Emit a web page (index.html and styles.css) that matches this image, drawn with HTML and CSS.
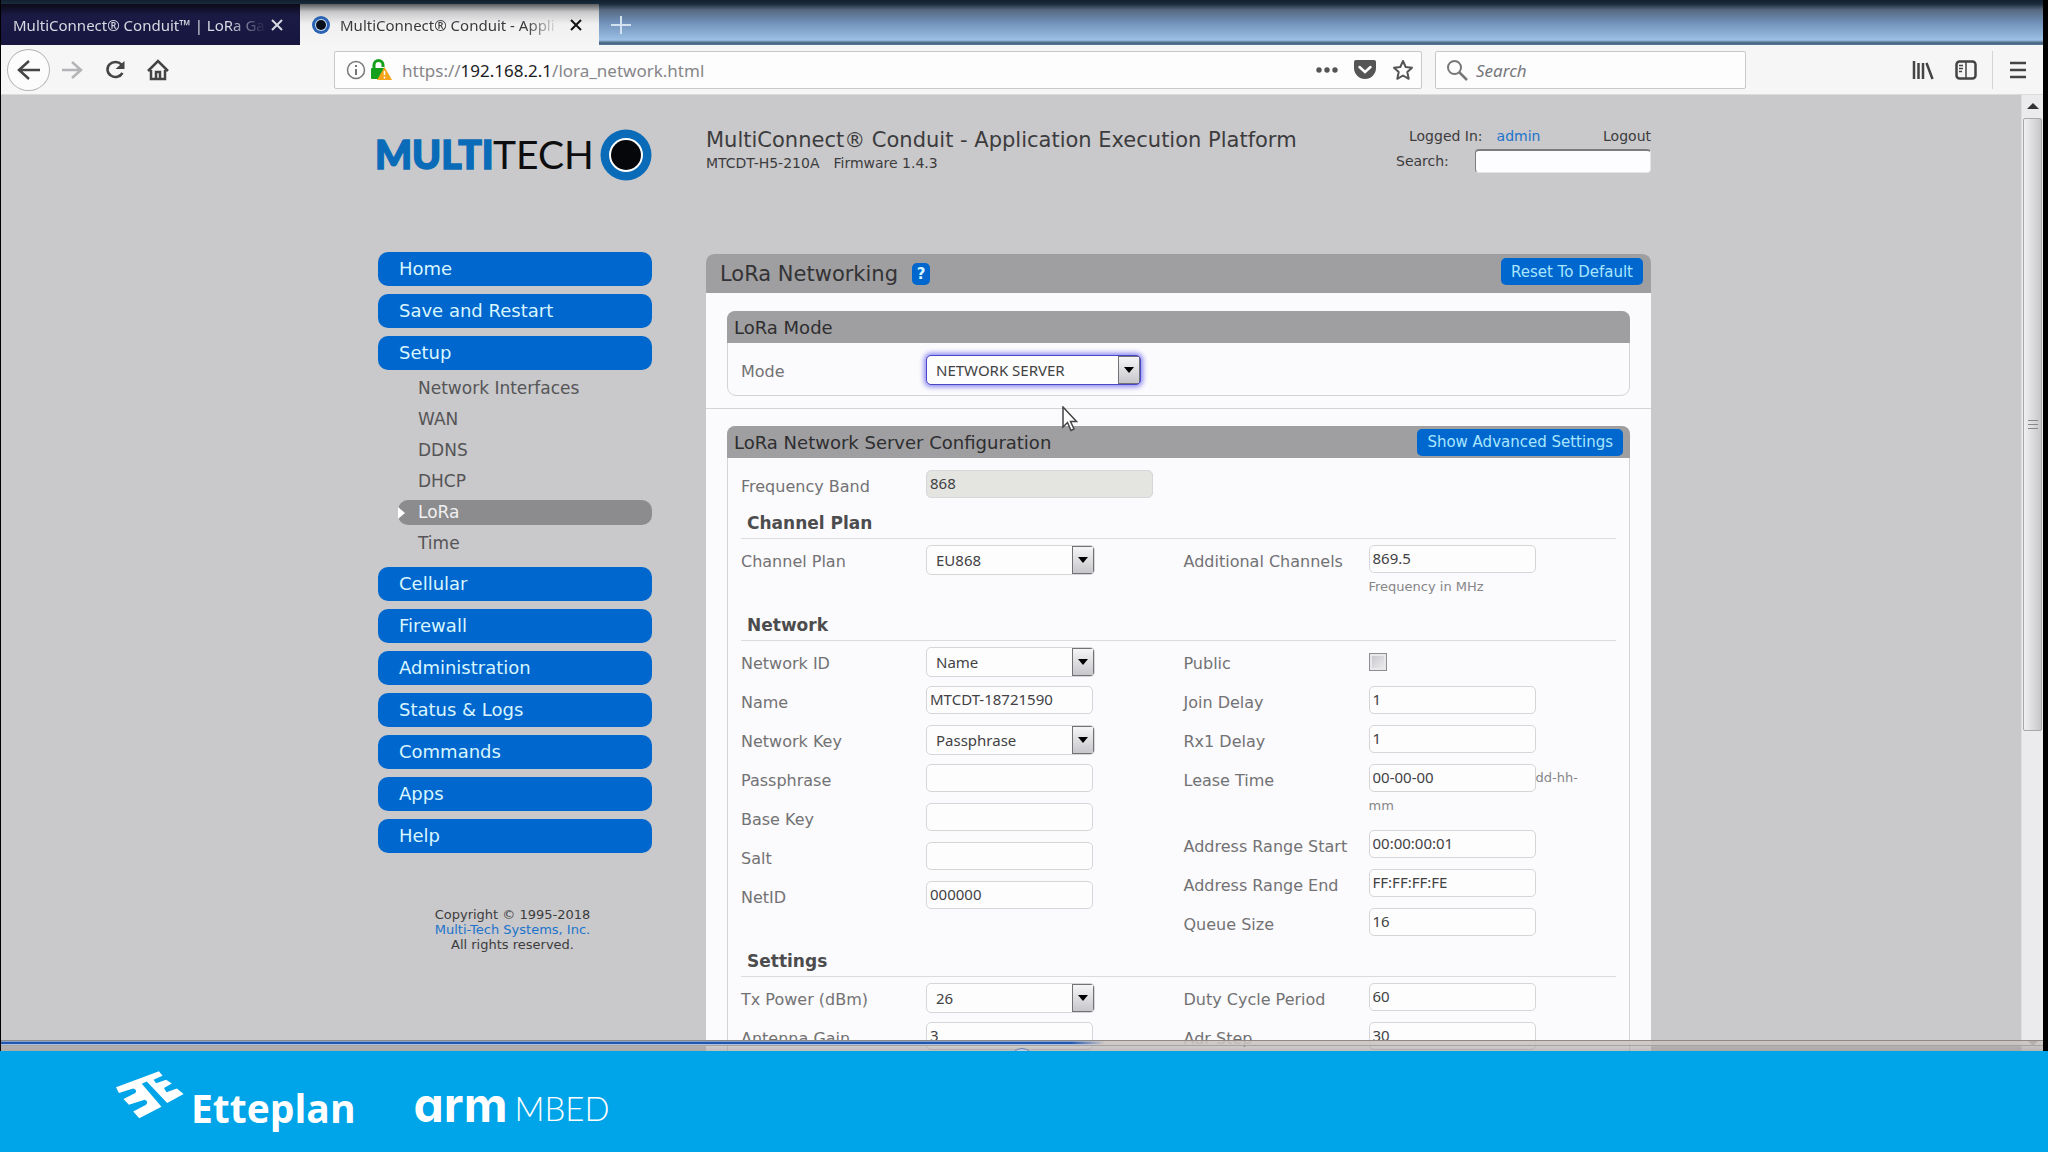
FILE: index.html
```html
<!DOCTYPE html>
<html lang="en">
<head>
<meta charset="utf-8">
<title>MultiConnect® Conduit - Application Execution Platform</title>
<link rel="stylesheet" href="styles.css">
</head>
<body>
<div class="window">
  <div class="tabs">
    <div class="tab">
      <span class="tab-title">MultiConnect® Conduit™ | LoRa Ga</span>
      <button class="tab-close" aria-label="Close tab"><svg width="14" height="14" viewBox="0 0 14 14"><path d="M2 2l10 10M12 2L2 12"/></svg></button>
    </div>
    <div class="tab tab-active">
      <svg class="favicon" width="18" height="18" viewBox="0 0 18 18"><circle cx="9" cy="9" r="9" fill="#2a63b4"/><circle cx="9" cy="9" r="6" fill="#cfe0f4"/><circle cx="9" cy="9" r="5" fill="#0a0f1c"/></svg>
      <span class="tab-title">MultiConnect® Conduit - Appli</span>
      <button class="tab-close" aria-label="Close tab"><svg width="14" height="14" viewBox="0 0 14 14"><path d="M2 2l10 10M12 2L2 12"/></svg></button>
    </div>
    <button class="tab-new" aria-label="New tab"><svg width="20" height="18" viewBox="0 0 20 18"><path d="M10 0v18M0 9h20"/></svg></button>
  </div>

  <div class="toolbar">
    <button class="tool tool-back" aria-label="Back"><svg width="24" height="22" viewBox="0 0 24 22"><path d="M23 11H3M12 2l-10 9 10 9"/></svg></button>
    <button class="tool tool-dim" aria-label="Forward"><svg width="22" height="20" viewBox="0 0 22 20"><path d="M1 10h18M11 2l9 8-9 8"/></svg></button>
    <button class="tool" aria-label="Reload"><svg width="22" height="20" viewBox="0 0 22 20"><path d="M17.500 4.500A8 7.500 0 1 0 18.500 13"/><path d="M20.500 1v8h-9z" fill="#444" stroke="none"/></svg></button>
    <button class="tool" aria-label="Home"><svg width="24" height="22" viewBox="0 0 24 22"><path d="M2 12L12 2l10 10M5 11v9h14v-9M10 20v-7h4v7"/></svg></button>
    <div class="address">
      <svg width="20" height="20" viewBox="0 0 20 20" fill="none" stroke="#777" stroke-width="1.500"><circle cx="10" cy="10" r="8.500"/><path d="M10 9v6M10 5v2" stroke-width="2"/></svg>
      <svg class="lock" width="22" height="22" viewBox="0 0 22 22"><path d="M4 11V6a4.500 4.500 0 0 1 9 0v2" fill="none" stroke="#14a01c" stroke-width="3"/><rect x="1" y="9" width="14" height="11" rx="1" fill="#14a01c"/><path d="M14.500 8L22 21H7z" fill="#f5a41c"/><path d="M14.500 12v4M14.500 17.500v2" stroke="#fff" stroke-width="1.500"/></svg>
      <span class="url">https://<b>192.168.2.1</b>/lora_network.html</span>
      <svg width="22" height="8" viewBox="0 0 22 8" fill="#555"><circle cx="3" cy="4" r="2.700"/><circle cx="11" cy="4" r="2.700"/><circle cx="19" cy="4" r="2.700"/></svg>
      <svg width="22" height="20" viewBox="0 0 22 20"><path d="M2 0h18a2 2 0 0 1 2 2v6a11 11 0 0 1-22 0V2a2 2 0 0 1 2-2z" fill="#555"/><path d="M5.500 7l5.500 5 5.500-5" fill="none" stroke="#fff" stroke-width="2.500" stroke-linecap="round"/></svg>
      <svg width="22" height="22" viewBox="0 0 22 22"><path d="M11 2l2.700 6 6.300.7-4.700 4.300 1.400 6.800L11 16.500l-5.700 3.300L6.700 13 2 8.700 8.300 8z" fill="none" stroke="#555" stroke-width="2" stroke-linejoin="round"/></svg>
    </div>
    <div class="web-search">
      <svg width="22" height="22" viewBox="0 0 22 22" fill="none" stroke="#777" stroke-width="2"><circle cx="8.500" cy="8.500" r="6.500"/><path d="M13 13l8 8" stroke-width="2.500"/></svg>
      <input type="text" placeholder="Search" aria-label="Web search">
    </div>
    <div class="tools-end">
      <button class="tool" aria-label="Library"><svg width="22" height="20" viewBox="0 0 22 20"><path d="M2 1v18M6.500 3v16M11 3v16M14.500 3l6 16" /></svg></button>
      <button class="tool" aria-label="Sidebars"><svg width="22" height="20" viewBox="0 0 22 20"><rect x="1.500" y="1.500" width="19" height="17" rx="3"/><path d="M11 2v16M4 5.500h4M4 8.500h4M4 11.500h3" stroke-width="1.500"/></svg></button>
      <button class="tool tool-menu" aria-label="Menu"><svg width="18" height="18" viewBox="0 0 18 18"><path d="M1 2h16M1 9h16M1 16h16"/></svg></button>
    </div>
  </div>

  <div class="view">
    <div class="page">
      <aside class="side">
        <div class="logo" aria-label="MultiTech">
          <svg width="278" height="52" viewBox="0 0 278 52"><text x="0" y="40" class="logo-multi">MULTI</text><text x="118" y="40" class="logo-tech">TECH</text><circle cx="251" cy="26" r="25.500" fill="#0a6cb8"/><circle cx="251" cy="26" r="17" fill="#fff"/><circle cx="251" cy="26" r="15" fill="#05070b"/></svg>
        </div>
        <nav class="menu">
          <a class="menu-item" href="#">Home</a>
          <a class="menu-item" href="#">Save and Restart</a>
          <a class="menu-item" href="#">Setup</a>
          <div class="submenu">
            <a href="#">Network Interfaces</a>
            <a href="#">WAN</a>
            <a href="#">DDNS</a>
            <a href="#">DHCP</a>
            <a href="#" class="current">LoRa</a>
            <a href="#">Time</a>
          </div>
          <a class="menu-item" href="#">Cellular</a>
          <a class="menu-item" href="#">Firewall</a>
          <a class="menu-item" href="#">Administration</a>
          <a class="menu-item" href="#">Status &amp; Logs</a>
          <a class="menu-item" href="#">Commands</a>
          <a class="menu-item" href="#">Apps</a>
          <a class="menu-item" href="#">Help</a>
        </nav>
        <p class="copyright">Copyright © 1995-2018<br><a href="#">Multi-Tech Systems, Inc.</a><br>All rights reserved.</p>
      </aside>

      <main class="main">
        <header class="head">
          <div class="product">
            <h1>MultiConnect® Conduit - Application Execution Platform</h1>
            <p class="device"><span>MTCDT-H5-210A</span><span>Firmware 1.4.3</span></p>
          </div>
          <div class="account">
            <div class="account-row"><span>Logged In:</span><a class="user" href="#">admin</a><a class="logout" href="#">Logout</a></div>
            <div class="account-row search-row"><label for="site-search">Search:</label><input id="site-search" type="text"></div>
          </div>
        </header>

        <section class="panel">
          <div class="panel-head">
            <h2>LoRa Networking</h2>
            <button class="help" aria-label="Help">?</button>
            <button class="action">Reset To Default</button>
          </div>

          <div class="mode-area">
            <div class="box">
              <div class="box-head"><h3>LoRa Mode</h3></div>
              <div class="box-body mode-body">
                <div class="row"><label for="mode">Mode</label><div class="control"><select id="mode" class="wide focused"><option>NETWORK SERVER</option></select></div></div>
              </div>
            </div>
          </div>

          <div class="config-area">
            <div class="box">
              <div class="box-head"><h3>LoRa Network Server Configuration</h3><button class="action">Show Advanced Settings</button></div>
              <div class="box-body">
                <div class="row"><label for="band">Frequency Band</label><div class="control"><input id="band" class="band" type="text" value="868" disabled></div></div>

                <h4>Channel Plan</h4>
                <div class="columns">
                  <div>
                    <div class="row"><label for="plan">Channel Plan</label><div class="control"><select id="plan"><option>EU868</option></select></div></div>
                  </div>
                  <div>
                    <div class="row"><label for="extra">Additional Channels</label><div class="control"><input id="extra" type="text" value="869.5"><span class="hint hint-below">Frequency in MHz</span></div></div>
                  </div>
                </div>

                <h4>Network</h4>
                <div class="columns">
                  <div>
                    <div class="row"><label for="netid-type">Network ID</label><div class="control"><select id="netid-type"><option>Name</option></select></div></div>
                    <div class="row"><label for="name">Name</label><div class="control"><input id="name" type="text" value="MTCDT-18721590"></div></div>
                    <div class="row"><label for="key">Network Key</label><div class="control"><select id="key"><option>Passphrase</option></select></div></div>
                    <div class="row"><label for="pass">Passphrase</label><div class="control"><input id="pass" type="text"></div></div>
                    <div class="row"><label for="base">Base Key</label><div class="control"><input id="base" type="text"></div></div>
                    <div class="row"><label for="salt">Salt</label><div class="control"><input id="salt" type="text"></div></div>
                    <div class="row"><label for="netid">NetID</label><div class="control"><input id="netid" type="text" value="000000"></div></div>
                  </div>
                  <div>
                    <div class="row"><label for="public">Public</label><div class="control"><input id="public" type="checkbox"></div></div>
                    <div class="row"><label for="join">Join Delay</label><div class="control"><input id="join" type="text" value="1"></div></div>
                    <div class="row"><label for="rx1">Rx1 Delay</label><div class="control"><input id="rx1" type="text" value="1"></div></div>
                    <div class="row"><label for="lease">Lease Time</label><div class="control"><input id="lease" type="text" value="00-00-00"><span class="hint">dd-hh-mm</span></div></div>
                    <div class="row"><label for="start">Address Range Start</label><div class="control"><input id="start" type="text" value="00:00:00:01"></div></div>
                    <div class="row"><label for="end">Address Range End</label><div class="control"><input id="end" type="text" value="FF:FF:FF:FE"></div></div>
                    <div class="row"><label for="queue">Queue Size</label><div class="control"><input id="queue" type="text" value="16"></div></div>
                  </div>
                </div>

                <h4>Settings</h4>
                <div class="columns">
                  <div>
                    <div class="row"><label for="tx">Tx Power (dBm)</label><div class="control"><select id="tx"><option>26</option></select></div></div>
                    <div class="row"><label for="gain">Antenna Gain</label><div class="control"><input id="gain" type="text" value="3"></div></div>
                  </div>
                  <div>
                    <div class="row"><label for="duty">Duty Cycle Period</label><div class="control"><input id="duty" type="text" value="60"></div></div>
                    <div class="row"><label for="adr">Adr Step</label><div class="control"><input id="adr" type="text" value="30"></div></div>
                  </div>
                </div>
              </div>
            </div>
          </div>
        </section>
      </main>
    </div>

    <div class="scrollbar">
      <svg width="12" height="6" viewBox="0 0 12 6"><path d="M6 0l6 6H0z" fill="#333"/></svg>
      <div class="thumb"><span class="grip"></span></div>
      <svg class="scroll-down" width="12" height="6" viewBox="0 0 12 6"><path d="M0 0h12L6 6z" fill="#333"/></svg>
    </div>

    <svg class="cursor" width="16" height="26" viewBox="0 0 16 26"><path d="M1 1v20l4.500-4.500L9 24.500l3-1.500-3.500-7.500h6z" fill="#fff" stroke="#444" stroke-width="1.500"/></svg>
    <div class="player">
      <div class="player-line"><div class="played"></div></div>
      <span class="knob"></span>
    </div>
  </div>
</div>

<footer class="brand">
  <svg width="68" height="48" viewBox="100 122 190 142" preserveAspectRatio="none"><path fill="#fff" d="M100 170L220 123L230 136L205 148L212 158L240 148L256 159L234 172L241 185L270 174L289 190L243 217L186 153L172 160L227 228L165 262L148 242L184 222Q192 212 180 207L136 222L121 205L154 187Q160 178 148 174L108 187Z"/></svg>
  <span class="etteplan">Etteplan</span>
  <span class="arm">arm</span>
  <span class="mbed">MBED</span>
</footer>
</body>
</html>
```
FILE: styles.css
```css
* { box-sizing: border-box; }

body {
  margin: 0;
  height: 100vh;
  display: flex;
  flex-direction: column;
  overflow: hidden;
  background: #000;
  font-family: "DejaVu Sans", Verdana, sans-serif;
  font-size: 15px;
  color: #3c3c3e;
}

h1, h2, h3, h4, p { margin: 0; font-weight: normal; }
a { color: inherit; text-decoration: none; }
button { border: 0; padding: 0; background: none; font: inherit; color: inherit; }
svg { display: block; flex: none; }

.window {
  flex: 1;
  min-height: 0;
  margin: 0 5px 0 1px;
  display: flex;
  flex-direction: column;
}

/* Browser tabs */
.tabs {
  flex: none;
  height: 45px;
  padding-top: 4px;
  display: flex;
  background: linear-gradient(#10202f 0, #1a2b3c 4px, #56697f 10px, #6f8fb8 22px, #9cc0e4 40px, #44607c 43px, #5b7896);
  font-family: "Noto Sans", "Open Sans", sans-serif;
}
.tab {
  width: 299px;
  display: flex;
  align-items: center;
  padding: 0 16px 0 12px;
  gap: 4px;
  background: linear-gradient(#0b0b18, #1b1a45 12px, #17163f);
  color: #d8d8e2;
}
.tab-active {
  gap: 10px;
  background: linear-gradient(#5a5c60, #c8c8ca 8px, #f0f0f1 20px, #f5f5f6);
  color: #3a3a3c;
}
.tab-title {
  flex: 1;
  white-space: nowrap;
  -webkit-mask-image: linear-gradient(90deg, #000 85%, transparent);
  mask-image: linear-gradient(90deg, #000 85%, transparent);
}
.tab-close svg, .tab-new svg { fill: none; stroke: currentColor; stroke-width: 2; }
.tab-active .tab-close { color: #111; }
.tab-new { padding: 0 12px; color: #d2e2ee; }

/* Browser toolbar */
.toolbar {
  flex: none;
  height: 50px;
  display: flex;
  align-items: center;
  padding: 0 16px 0 6px;
  background: #f6f6f7;
  border-bottom: 1px solid #dcdcde;
  font-family: "Noto Sans", "Open Sans", sans-serif;
  font-size: 17px;
}
.tool { width: 43px; height: 42px; display: flex; align-items: center; justify-content: center; }
.tool svg { fill: none; stroke: #444; stroke-width: 2.5; }
.tool-back { border: 1px solid #b5b5b8; border-radius: 50%; background: #fcfcfd; }
.tool-dim svg { stroke: #b4b4b6; }
.address, .web-search {
  height: 38px;
  display: flex;
  align-items: center;
  background: #fdfdfe;
  border: 1px solid #c8c8ca;
  border-radius: 2px;
}
.address { flex: 1; margin-left: 155px; padding: 0 7px 0 11px; gap: 16px; }
.address .lock { margin-left: -12px; }
.url { flex: 1; margin-left: -6px; padding-top: 2px; color: #868688; white-space: nowrap; }
.url b { font-weight: normal; color: #1c1c1e; }
.web-search { width: 311px; margin-left: 13px; padding: 0 10px; gap: 8px; }
.web-search input { flex: 1; min-width: 0; border: 0; padding: 2px 0 0; background: none; font: italic 17px "Noto Sans", sans-serif; }
.web-search input::placeholder { color: #77777a; opacity: 1; }
.tools-end { display: flex; margin-left: 155px; align-items: center; }
.tool-menu { width: 35px; height: 38px; margin-left: 5px; border-left: 1px solid #d4d4d6; justify-content: flex-end; }

/* Web page */
.view { position: relative; flex: 1; min-height: 0; display: flex; overflow: hidden; background: #c9c8ca; }
.page {
  flex: 1;
  display: flex;
  justify-content: center;
  align-items: flex-start;
  gap: 54px;
  padding: 31px 0 0 4px;
}
.side { width: 277px; padding-top: 3px; }
.logo { height: 52px; }
.logo-multi { font: 900 39px Lato, sans-serif; fill: #0a6cb8; stroke: #0a6cb8; stroke-width: 1.5; }
.logo-tech { font: 400 39px Lato, sans-serif; fill: #0d0d0f; }

.menu { display: flex; flex-direction: column; gap: 8px; margin: 71px 0 0 3px; }
.menu-item {
  height: 34px;
  padding-left: 21px;
  border-radius: 10px;
  background: #0067ce;
  color: #d8f6ff;
  font-size: 18px;
  line-height: 34px;
}
.submenu { display: flex; flex-direction: column; gap: 6px; margin: -2px 0 3px 20px; font-size: 17px; color: #555557; }
.submenu a { height: 25px; padding-left: 20px; line-height: 25px; }
.submenu .current {
  position: relative;
  border-radius: 10px;
  background: #8c8b8d;
  color: #f0f0f2;
}
.submenu .current::before {
  content: "";
  position: absolute;
  left: 0;
  top: 7px;
  border: 6px solid transparent;
  border-left: 7px solid #fff;
  border-right: 0;
}
.copyright { margin: 54px 0 0; text-align: center; font-size: 13px; line-height: 15px; padding-right: 2px; }
.copyright a, .user { color: #1c74cc; }

.main { width: 945px; }
.head { display: flex; justify-content: space-between; height: 128px; }
.product { padding-top: 3px; }
.head h1 { font-size: 21px; line-height: 22px; }
.device { display: flex; gap: 14px; font-size: 14px; line-height: 24px; }
.account { width: 255px; font-size: 14px; }
.account-row { display: flex; align-items: center; height: 20px; padding-left: 13px; }
.user { margin-left: 14px; }
.logout { margin-left: auto; }
.search-row { height: 28px; padding: 2px 0 0; justify-content: space-between; }
.search-row input {
  width: 176px;
  height: 24px;
  border: 1px solid #e4e4e6;
  border-top: 2px solid #7c7c7e;
  border-left-color: #7c7c7e;
  border-radius: 4px;
  background: #fdfcfe;
}

.panel { background: #fbfafc; border-radius: 8px 8px 0 0; padding-bottom: 40px; }
.panel-head {
  display: flex;
  align-items: center;
  height: 39px;
  padding: 0 8px 0 14px;
  gap: 14px;
  background: #9f9ea0;
  border-radius: 8px 8px 0 0;
}
.panel-head h2 { font-size: 21px; color: #333335; }
.help { width: 18px; height: 22px; border-radius: 5px; background: #0067ce; color: #d8f6ff; font-size: 15px; font-weight: bold; }
.action {
  height: 27px;
  margin-left: auto;
  padding: 0 10px;
  border-radius: 5px;
  background: #0067ce;
  color: #a8e6ff;
  font-size: 15px;
}
.panel-head .action { margin-bottom: 4px; }
.mode-area { padding: 18px 21px 12px; border-bottom: 1px solid #d4d3d6; }
.config-area { padding: 17px 21px 0; }
.box { border: 1px solid #d4d3d6; border-radius: 9px; }
.box-head {
  display: flex;
  align-items: center;
  height: 32px;
  margin: -1px -1px 0;
  padding: 0 7px;
  background: #9f9ea0;
  border-radius: 8px 8px 0 0;
}
.box-head h3 { font-size: 18px; color: #2e2e30; }
.box-body { padding: 12px 13px; }
.mode-body { padding-bottom: 1px; }

.row { display: flex; min-height: 39px; }
.row label { width: 185px; flex: none; padding-top: 3px; line-height: 28px; font-size: 16px; color: #727274; }
.control { width: 228px; padding-bottom: 11px; line-height: 27px; }
.control input, .control select {
  font: 15px "Noto Sans", "Open Sans", sans-serif;
  color: #424244;
  border: 1px solid #d6d5d8;
  border-radius: 5px;
  background-color: #fdfdfe;
}
.control input { width: 167px; height: 28px; padding: 0 3px 2px; vertical-align: top; }
.control .band { width: 227px; background: #e4e4e1; }
.control select {
  display: block;
  appearance: none;
  width: 169px;
  height: 30px;
  margin-bottom: -2px;
  padding: 0 24px 0 9px;
  background-image: url("data:image/svg+xml,%3Csvg xmlns='http://www.w3.org/2000/svg' width='22' height='28'%3E%3Cdefs%3E%3ClinearGradient id='g' x2='0' y2='1'%3E%3Cstop stop-color='%23f6f6f8'/%3E%3Cstop offset='1' stop-color='%23c6c6ca'/%3E%3C/linearGradient%3E%3C/defs%3E%3Crect x='.5' y='.5' width='21' height='27' fill='url(%23g)' stroke='%23727276'/%3E%3Cpath d='M6 11h10l-5 6z' fill='%23000'/%3E%3C/svg%3E");
  background-repeat: no-repeat;
  background-position: right center;
}
.control .wide { width: 215px; }
.control .focused { border-color: #4c46c8; box-shadow: 0 0 5px 2px #8c88f0; }
.control input[type="checkbox"] {
  appearance: none;
  width: 18px;
  height: 18px;
  margin: 6px 0 0;
  border: 1px solid #8e8e92;
  border-radius: 0;
  background: linear-gradient(135deg, #c4c4c8, #f0f0f3);
  box-shadow: inset 0 0 0 2px #e8e8ea;
}
.hint { font-size: 13px; color: #868688; }
.hint-below { display: block; }
.columns { display: grid; grid-template-columns: 1fr 1fr; gap: 10px; }
h4 {
  margin: 2px 0 6px;
  padding: 0 6px 3px;
  border-bottom: 1px solid #dcdbde;
  font-size: 17px;
  font-weight: bold;
  line-height: 24px;
  color: #4c4c4e;
}

.scrollbar {
  width: 22px;
  display: flex;
  flex-direction: column;
  align-items: center;
  padding: 8px 1px 5px;
  background: #ebeaec;
  border-left: 1px solid #dddcde;
}
.thumb {
  width: 100%;
  height: 65%;
  margin-top: 9px;
  display: flex;
  align-items: center;
  justify-content: center;
  border: 1px solid #a8a7aa;
  border-radius: 2px;
  background: linear-gradient(90deg, #f0eff2, #dcdbde 50%, #c6c5c8);
}
.grip { width: 10px; height: 9px; background: repeating-linear-gradient(#88878a 0 1px, transparent 1px 4px); }
.scroll-down { margin-top: auto; }
.cursor { position: absolute; left: 1061px; top: 311px; }

/* Video progress strip over the page's lower edge */
.player {
  position: absolute;
  inset: auto 0 0;
  height: 11px;
  overflow: hidden;
  background: linear-gradient(rgba(160, 155, 152, .3), rgba(150, 148, 146, .6));
}
.player-line { height: 6px; border-top: 1px solid #8f8a88; border-bottom: 1px solid #a7a29f; background: rgba(205, 199, 196, .8); }
.played { width: 54%; height: 4px; background: linear-gradient(90deg, transparent 97%, #cdc7c4), linear-gradient(#7aa0d6 0 1px, #2355ac 1px 3px, #a9c2e8 3px); }
.knob {
  position: absolute;
  left: 1009px;
  top: 8px;
  width: 24px;
  height: 24px;
  border: 1px solid #667fae;
  border-radius: 50%;
  background: #c9ccd8;
}

.brand {
  flex: none;
  height: 101px;
  display: flex;
  align-items: flex-start;
  padding: 20px 0 0 116px;
  background: #00a4e8;
  color: #fff;
  white-space: nowrap;
}
.etteplan { margin: 11px 0 0 7px; font: bold 39px/52px "Open Sans", "Noto Sans", sans-serif; }
.arm { margin: 8px 0 0 58px; font: bold 48px/52px Inter, sans-serif; font-feature-settings: "cv11"; }
.mbed { margin: 11px 0 0 7px; font: 300 33px/52px Lato, sans-serif; }
```
